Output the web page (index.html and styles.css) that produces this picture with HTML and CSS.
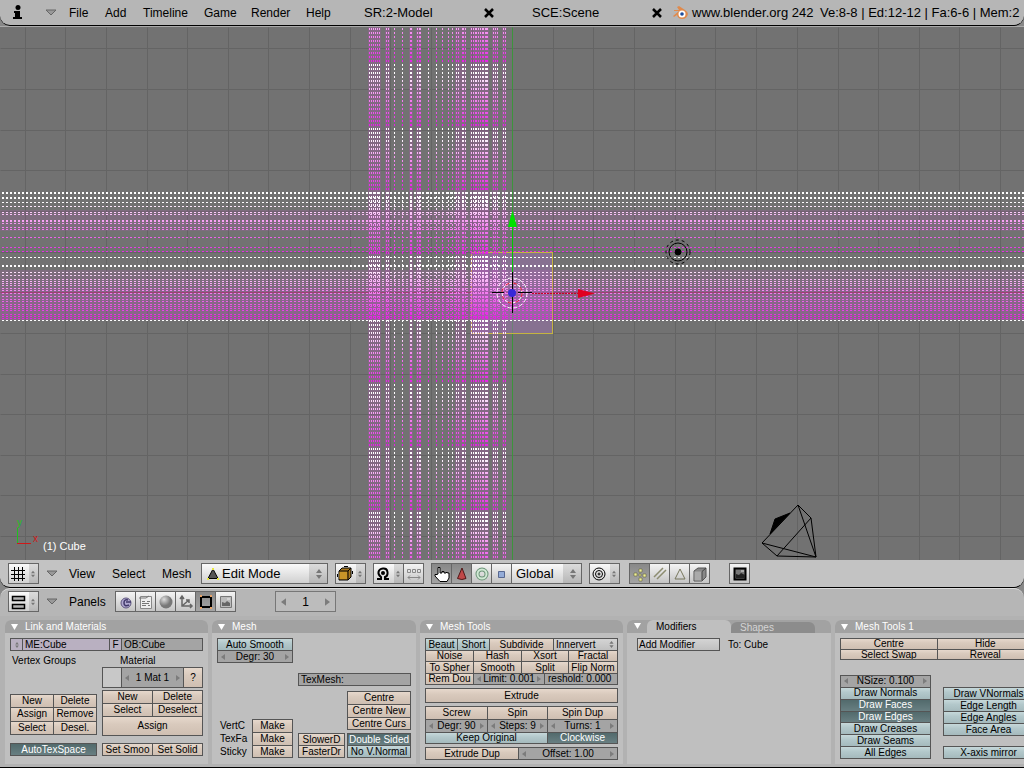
FILE: index.html
```
<!DOCTYPE html>
<html lang="en">
<head>
    <meta charset="UTF-8">
    <meta name="viewport" content="width=device-width, initial-scale=1.0">
    <title>Blender</title>
    <link rel="stylesheet" href="styles.css">
</head>
<body>
    <!-- shared icons -->
    <svg class="defs" width="0" height="0">
        <symbol id="fold" viewBox="0 0 12 7"><path d="M1 1h10L6 6z" fill="#999" stroke="#666"/></symbol>
        <symbol id="step" viewBox="0 0 6 10"><path d="M0 4l3-4 3 4zM0 6h6l-3 4z" fill="#777"/></symbol>
        <symbol id="close" viewBox="0 0 10 10"><path d="M1 1l8 8M9 1l-8 8" stroke="#000" stroke-width="2.5"/></symbol>
        <symbol id="left" viewBox="0 0 4 6"><path d="M4 0v6L0 3z" fill="#7c7c7c"/></symbol>
        <symbol id="right" viewBox="0 0 4 6"><path d="M0 0v6l4-3z" fill="#7c7c7c"/></symbol>
        <symbol id="open" viewBox="0 0 7 6"><path d="M0 0h7L3.500 6z" fill="#fff"/></symbol>
    </svg>

    <header class="info-bar">
        <button class="plain info-icon" aria-label="Window type"><svg width="9" height="15" viewBox="0 0 9 15"><circle cx="5" cy="2.500" r="2.500"/><path d="M1 6h6v6h2v2H0v-2h2V8H1z"/></svg></button>
        <button class="plain fold" aria-label="Collapse menus"><svg width="12" height="7"><use href="#fold"/></svg></button>
        <nav class="menus">
            <button class="plain m-file">File</button>
            <button class="plain m-add">Add</button>
            <button class="plain m-timeline">Timeline</button>
            <button class="plain m-game">Game</button>
            <button class="plain m-render">Render</button>
            <button class="plain m-help">Help</button>
        </nav>
        <input class="data-name screen-name" type="text" value="SR:2-Model" aria-label="Screen">
        <button class="plain close" aria-label="Delete screen"><svg width="10" height="10"><use href="#close"/></svg></button>
        <input class="data-name scene-name" type="text" value="SCE:Scene" aria-label="Scene">
        <button class="plain close" aria-label="Delete scene"><svg width="10" height="10"><use href="#close"/></svg></button>
        <svg class="logo" width="16" height="14" viewBox="0 0 16 14">
            <path d="M1 10L7 5H2V4h5L5 1l2-1 6 4q3 2 3 4-1 5-6 5-4 0-5-4l-3 2z" fill="#e08a4c"/>
            <circle cx="10" cy="8" r="3.500" fill="#fff"/><circle cx="10" cy="8" r="1.800" fill="#1c4c9c"/>
        </svg>
        <a class="site" href="#">www.blender.org 242</a>
        <span class="stats">Ve:8-8 | Ed:12-12 | Fa:6-6 | Mem:2</span>
    </header>

    <main class="view3d">
        <svg class="scene" viewBox="0 27 1024 533" preserveAspectRatio="xMidYMid slice">
            <defs>
                <linearGradient id="fade" gradientUnits="userSpaceOnUse" x1="0" y1="64" x2="0" y2="128" spreadMethod="repeat">
                    <stop offset="0" stop-color="#fff"/>
                    <stop offset=".15" stop-color="#fff"/>
                    <stop offset=".5" stop-color="#f690f2"/>
                    <stop offset="1" stop-color="#e418e4"/>
                </linearGradient>
            </defs>
            <g transform="translate(.5 .5)" fill="none">
                <path class="grid" d="M25 27v533M65 27v533M106 27v533M147 27v533M187 27v533M228 27v533M268 27v533M309 27v533M350 27v533M390 27v533M431 27v533M472 27v533M553 27v533M593 27v533M634 27v533M675 27v533M715 27v533M756 27v533M797 27v533M838 27v533M878 27v533M919 27v533M959 27v533M1000 27v533
                    M0 48h1024M0 89h1024M0 130h1024M0 170h1024M0 211h1024M0 252h1024M0 333h1024M0 374h1024M0 414h1024M0 455h1024M0 495h1024M0 536h1024"/>
                <path class="axis-x" d="M0 292h1024"/>
                <path class="axis-y" d="M512 27v533"/>
                <rect class="cube" x="471" y="252" width="81" height="81"/>
            </g>
            <!-- tint behind the stippled lines -->
            <g fill="#e838e8">
                <path d="M368 27h13v533h-13zM385 27h5v533h-5zM409 27h4v533h-4zM416 27h5v533h-5zM455 27h11v533h-11zM470 27h19v533h-19zM492 27h6v533h-6zM502 27h4v533h-4z" opacity=".16"/>
                <path d="M0 210h1024v21H0zM0 270h1024v18H0z" opacity=".1"/>
                <path d="M0 288h1024v32H0z" opacity=".2"/>
            </g>
            <!-- stippled columns and rows -->
            <g transform="translate(.5 0)">
                <path class="stipple" d="M369 28v532M371 28v532M373 28v532M375 28v532M377 28v532M379 28v532M386 28v532M388 28v532M394 28v532M402 28v532M410 28v532M411 28v532M417 28v532M419 28v532M420 28v532M428 28v532M436 28v532M442 28v532M448 28v532M452 28v532M456 28v532M458 28v532M462 28v532M463 28v532M465 28v532M471 28v532M473 28v532M475 28v532M476 28v532M478 28v532M480 28v532M482 28v532M483 28v532M485 28v532M486 28v532M487 28v532M493 28v532M495 28v532M497 28v532M503 28v532M505 28v532"/>
            </g>
            <g transform="translate(0 .5)">
                <path class="stipple" d="M2 192h1022M2 193h1022M2 197h1022M2 198h1022M2 202h1022M2 206h1022M2 212h1022M2 214h1022M2 220h1022M2 221h1022M2 223h1022M2 227h1022M2 229h1022M2 237h1022M2 247h1022M2 251h1022M2 257h1022M2 265h1022M2 266h1022M2 272h1022M2 275h1022M2 279h1022M2 281h1022M2 283h1022M2 285h1022M2 288h1022M2 290h1022M2 293h1022M2 296h1022M2 299h1022M2 301h1022M2 304h1022M2 306h1022M2 308h1022M2 310h1022M2 314h1022M2 316h1022M2 318h1022M2 320h1022"/>
            </g>
            <!-- manipulator and 3D cursor -->
            <g fill="none">
                <path d="M512.500 228v44" stroke="#00c800"/>
                <path d="M508 227h9l-4.500-17z" fill="#00e000"/>
                <path d="M532 293.500h47" stroke="#c80020" stroke-dasharray="2 1"/>
                <path d="M578 289v9l17-4.500z" fill="#e00020"/>
                <circle cx="512" cy="293" r="15" stroke="#fff" stroke-dasharray="4 2"/>
                <circle cx="512" cy="293" r="10" stroke="#fff"/>
                <circle cx="512" cy="293" r="10" stroke="#e00020" stroke-dasharray="4 4"/>
                <path d="M512.500 272v41M492 292.500h12M518 292.500h14" stroke="#000"/>
                <circle cx="512" cy="293" r="4" fill="#3828d8"/>
            </g>
            <g fill="none" stroke="#000">
                <circle cx="678" cy="252" r="3" fill="#000"/>
                <circle cx="678" cy="252" r="9"/>
                <circle cx="678" cy="252" r="12" stroke-dasharray="3 3"/>
                <path d="M798 505l13 13 5 39zM798 505l-36 38 54 14-39-1-15-13M811 518l-34 38"/>
                <path d="M790 513l-15 6-5 15z" fill="#000"/>
            </g>
            <path d="M17.500 528v16" stroke="#20c020"/><path d="M17 543.500h14" stroke="#d01818"/>
            <text x="17" y="526" class="axis-label" fill="#20c020">y</text>
            <text x="33" y="542" class="axis-label" fill="#d01818">x</text>
            <text x="43" y="550" class="object-name">(1) Cube</text>
        </svg>
    </main>

    <div class="lower">
    <div class="toolbar view-bar">
        <button class="ctl type" aria-label="Editor type"><svg width="18" height="18" viewBox="0 0 18 18"><path d="M5.500 2v14M9.500 2v14M13.500 2v14M2 5.500h14M2 9.500h14M2 13.500h14" stroke="#000"/></svg><svg class="st" width="4" height="8"><use href="#step"/></svg></button>
        <button class="plain fold" aria-label="Collapse menus"><svg width="12" height="7"><use href="#fold"/></svg></button>
        <nav class="menus">
            <button class="plain m-view">View</button>
            <button class="plain m-select">Select</button>
            <button class="plain m-mesh">Mesh</button>
        </nav>
        <div class="drop mode">
            <svg class="mode-icon" width="12" height="12" viewBox="0 0 12 12"><path d="M6 1l5 9.500H1z" fill="#555" stroke="#000"/><path d="M5 0h2v2H5zM0 10h2v2H0zM10 10h2v2h-2z" fill="#e8e840"/></svg>
            <select aria-label="Mode"><option>Edit Mode</option></select>
            <svg class="st" width="8" height="10"><use href="#step"/></svg>
        </div>
        <button class="ctl type" aria-label="Draw type"><svg width="18" height="18" viewBox="0 0 18 18"><path d="M3 6l3-3h9v9l-3 3H3z" fill="#a87820" stroke="#000"/><path d="M3.500 6.500H11V14H3.500z" fill="#c89428"/><path d="M3 6h9l3-3M12 6v9M1.500 9v3M16.500 6v3M8 1.500h4" stroke="#000" fill="none"/></svg><svg class="st" width="4" height="8"><use href="#step"/></svg></button>
        <div class="joined">
            <button class="ctl type" aria-label="Pivot"><svg width="18" height="18" viewBox="0 0 18 18"><path d="M3 14h4v-2Q4 10 4.500 7T9 3.500 13.500 7 11 12v2h4" fill="none" stroke="#000" stroke-width="2"/><circle cx="9" cy="8" r="2"/></svg><svg class="st" width="4" height="8"><use href="#step"/></svg></button>
            <button class="ctl" aria-label="Move centers only"><svg width="18" height="18" viewBox="0 0 18 18"><path d="M2.500 4.500h3v3h-3zM7.500 4.500h3v3h-3zM12.500 4.500h3v3h-3zM3 12.500h12M5 10.500l-2 2 2 2M13 10.500l2 2-2 2" fill="none" stroke="#888"/></svg></button>
        </div>
        <div class="joined">
            <button class="ctl on" aria-label="Manipulator"><svg width="18" height="18" viewBox="0 0 18 18"><path d="M5 9V2.500h2V8h2V6.500h2V8h2v-.500h1.500V8H16v5l-2 3.500H7L2 11V9.500h2z" fill="#fff" stroke="#000"/></svg></button>
            <button class="ctl on" aria-label="Translate"><svg width="18" height="18" viewBox="0 0 18 18"><path d="M9 3L4.500 13.500Q9 15.500 13 13.500z" fill="#c04848" stroke="#501818"/></svg></button>
            <button class="ctl" aria-label="Rotate"><svg width="18" height="18" viewBox="0 0 18 18" fill="none"><circle cx="9" cy="9" r="4.500" stroke="#6c9478" stroke-width="4"/><circle cx="9" cy="9" r="4.500" stroke="#d0e8d4" stroke-width="2"/></svg></button>
            <button class="ctl" aria-label="Scale"><svg width="18" height="18" viewBox="0 0 18 18"><path d="M5.500 6.500h6v6h-6z" fill="#94acd8" stroke="#586890"/></svg></button>
            <div class="drop orient"><select aria-label="Orientation"><option>Global</option></select><svg class="st" width="8" height="10"><use href="#step"/></svg></div>
        </div>
        <button class="ctl type prop" aria-label="Proportional"><svg width="18" height="18" viewBox="0 0 18 18" fill="none" stroke="#000"><circle cx="9" cy="9" r="6"/><circle cx="9" cy="9" r="3.500"/><circle cx="9" cy="9" r="1" /></svg><svg class="st" width="4" height="8"><use href="#step"/></svg></button>
        <div class="joined sel-modes">
            <button class="ctl on" aria-label="Vertex select"><svg width="18" height="18" viewBox="0 0 18 18"><path d="M8 4h3v3H8zM3 8h3v3H3zM12 9h3v3h-3zM8 13h3v3H8zM8 9h2v2H8z" fill="#f0f098" stroke="#66663c" stroke-width=".6"/></svg></button>
            <button class="ctl" aria-label="Edge select"><svg width="18" height="18" viewBox="0 0 18 18"><path d="M3 12l9-9M6 14l9-9" stroke="#8c8c70" stroke-width="1.500"/></svg></button>
            <button class="ctl" aria-label="Face select"><svg width="18" height="18" viewBox="0 0 18 18"><path d="M9 4l5 10H4z" fill="none" stroke="#77775c"/></svg></button>
            <button class="ctl" aria-label="Occlude"><svg width="18" height="18" viewBox="0 0 18 18"><path d="M3 6l4-3h8v9l-4 4H3z" fill="#888" stroke="#555"/><path d="M3.500 6.500H11v9H3.500z" fill="#aaa"/><path d="M11 6.500l4-3.500M11 6.500v9" stroke="#444" fill="none"/></svg></button>
        </div>
        <button class="ctl render" aria-label="Render view"><svg width="18" height="18" viewBox="0 0 18 18"><path d="M3.500 3.500h11v11h-11z" fill="#777" stroke="#000" stroke-width="2"/><path d="M5 13V9l3 1 2-2 4 2v3z" fill="#222"/><path d="M10 6h3" stroke="#ddd"/></svg></button>
    </div>

    <div class="toolbar buttons-bar">
        <button class="ctl type" aria-label="Editor type"><svg width="18" height="18" viewBox="0 0 18 18"><path d="M3.500 3.500h12v4h-12zM3.500 11.500h12v4h-12z" fill="#b4b4b4" stroke="#000" stroke-width="1.500"/></svg><svg class="st" width="4" height="8"><use href="#step"/></svg></button>
        <button class="plain fold" aria-label="Collapse menus"><svg width="12" height="7"><use href="#fold"/></svg></button>
        <button class="plain m-panels">Panels</button>
        <div class="joined">
            <button class="ctl" aria-label="Logic"><svg width="18" height="18" viewBox="0 0 18 18"><circle cx="9" cy="10" r="5" fill="#b0a8d0" stroke="#605880"/><path d="M14 9H9M11 7q-4-1-4 3t5 2" fill="none" stroke="#403868" stroke-width="1.500"/></svg></button>
            <button class="ctl" aria-label="Script"><svg width="18" height="18" viewBox="0 0 18 18"><path d="M3.500 3.500h11v12h-11z" fill="#eee" stroke="#888"/><path d="M2 5h7l3-2M5 8.500h3M10 8.500h3M5 10.500h7M5 12.500h4M11 12.500h2" stroke="#777" fill="none"/></svg></button>
            <button class="ctl" aria-label="Shading"><svg width="18" height="18" viewBox="0 0 18 18"><defs><radialGradient id="ball" cx=".35" cy=".3"><stop offset="0" stop-color="#ddd"/><stop offset="1" stop-color="#777"/></radialGradient></defs><circle cx="9" cy="9" r="6.500" fill="url(#ball)"/></svg></button>
            <button class="ctl" aria-label="Object"><svg width="18" height="18" viewBox="0 0 18 18"><path d="M5 4v9h10M5 13l7-6M3 6l2-3 2 3M13 11l2 2-2 2M9 7h3v3" fill="none" stroke="#666" stroke-width="1.500"/></svg></button>
            <button class="ctl on" aria-label="Editing"><svg width="18" height="18" viewBox="0 0 18 18"><path d="M4 4h10v10H4z" fill="none" stroke="#000" stroke-width="2"/><path d="M3 2h2v2H3zM13 2h2v2h-2zM3 14h2v2H3zM13 14h2v2h-2z" fill="#e8a468"/></svg></button>
            <button class="ctl" aria-label="Scene"><svg width="18" height="18" viewBox="0 0 18 18"><path d="M3.500 3.500h11v11h-11z" fill="#bbb" stroke="#777"/><path d="M5 13V9l3 1 2-2 3 2v3z" fill="#666"/><path d="M10 6h3" stroke="#eee"/></svg></button>
        </div>
        <div class="frame">
            <svg width="5" height="8"><use href="#left"/></svg><input type="text" value="1" aria-label="Frame"><svg width="5" height="8"><use href="#right"/></svg>
        </div>
    </div>

    <div class="panels">
        <section class="panel narrow">
            <h2><svg width="7" height="6"><use href="#open"/></svg>Link and Materials</h2>
            <div class="body">
                <div class="group link-row">
                    <button class="lilac" aria-label="Browse"><svg width="4" height="6"><use href="#step"/></svg></button>
                    <input class="lilac" type="text" value="ME:Cube" aria-label="Mesh name">
                    <button class="lilac">F</button>
                    <input class="num" type="text" value="OB:Cube" aria-label="Object name">
                </div>
                <div class="cols">
                    <div class="col vgroups">
                        <span class="label">Vertex Groups</span>
                        <div class="group vg-buttons">
                            <button>New</button><button>Delete</button>
                            <button>Assign</button><button>Remove</button>
                            <button>Select</button><button>Desel.</button>
                        </div>
                        <div class="group auto-tex"><button class="pressed">AutoTexSpace</button></div>
                    </div>
                    <div class="col material">
                        <span class="label mat-label">Material</span>
                        <div class="group mat-row">
                            <button class="swatch" aria-label="Material colour"></button>
                            <button class="num"><svg><use href="#left"/></svg>1 Mat 1<svg><use href="#right"/></svg></button>
                            <button>?</button>
                        </div>
                        <div class="group mat-buttons">
                            <button>New</button><button>Delete</button>
                            <button>Select</button><button>Deselect</button>
                            <button class="wide">Assign</button>
                        </div>
                        <div class="group set-row"><button>Set Smoo</button><button>Set Solid</button></div>
                    </div>
                </div>
            </div>
        </section>

        <section class="panel">
            <h2><svg width="7" height="6"><use href="#open"/></svg>Mesh</h2>
            <div class="body cols">
                <div class="col mesh-left">
                    <div class="group pair">
                        <button class="blue">Auto Smooth</button>
                        <button class="num"><svg><use href="#left"/></svg>Degr: 30<svg><use href="#right"/></svg></button>
                    </div>
                    <div class="make-row">
                        <div class="make-labels"><span>VertC</span><span>TexFa</span><span>Sticky</span></div>
                        <div class="group triple"><button>Make</button><button>Make</button><button>Make</button></div>
                    </div>
                </div>
                <div class="col mesh-right">
                    <div class="group texmesh"><input class="num" type="text" value="TexMesh:" aria-label="TexMesh"></div>
                    <div class="group triple centres"><button>Centre</button><button>Centre New</button><button>Centre Curs</button></div>
                    <div class="draw-row">
                        <div class="group pair"><button>SlowerD</button><button>FasterDr</button></div>
                        <div class="group pair"><button class="pressed">Double Sided</button><button class="blue">No V.Normal</button></div>
                    </div>
                </div>
            </div>
        </section>

        <section class="panel narrow">
            <h2><svg width="7" height="6"><use href="#open"/></svg>Mesh Tools</h2>
            <div class="body tools">
                <div class="group">
                    <div class="row r-subdiv">
                        <button class="blue">Beaut</button><button class="blue">Short</button><button>Subdivide</button>
                        <div class="mini-drop"><select aria-label="Corner type"><option>Innervert</option></select><svg width="5" height="7"><use href="#step"/></svg></div>
                    </div>
                    <div class="row r-four short"><button>Noise</button><button>Hash</button><button>Xsort</button><button>Fractal</button></div>
                    <div class="row r-four"><button>To Spher</button><button>Smooth</button><button>Split</button><button>Flip Norm</button></div>
                    <div class="row r-limit short"><button>Rem Dou</button><button class="num"><svg><use href="#left"/></svg>Limit: 0.001<svg><use href="#right"/></svg></button><button class="num">reshold: 0.000</button></div>
                </div>
                <div class="group extrude"><button>Extrude</button></div>
                <div class="group">
                    <div class="row r-spin"><button>Screw</button><button>Spin</button><button>Spin Dup</button></div>
                    <div class="row r-spin">
                        <button class="num"><svg><use href="#left"/></svg>Degr: 90<svg><use href="#right"/></svg></button>
                        <button class="num"><svg><use href="#left"/></svg>Steps: 9<svg><use href="#right"/></svg></button>
                        <button class="num"><svg><use href="#left"/></svg>Turns: 1<svg><use href="#right"/></svg></button>
                    </div>
                    <div class="row r-keep short"><button class="blue">Keep Original</button><button class="pressed">Clockwise</button></div>
                </div>
                <div class="group">
                    <div class="row r-dup"><button>Extrude Dup</button><button class="num"><svg><use href="#left"/></svg>Offset: 1.00<svg><use href="#right"/></svg></button></div>
                </div>
            </div>
        </section>

        <section class="panel">
            <div class="tabs">
                <svg width="7" height="6"><use href="#open"/></svg>
                <button class="tab active">Modifiers</button><button class="tab">Shapes</button>
            </div>
            <div class="body modifiers">
                <div class="group"><button class="grey">Add Modifier</button></div>
                <span>To: Cube</span>
            </div>
        </section>

        <section class="panel">
            <h2><svg width="7" height="6"><use href="#open"/></svg>Mesh Tools 1</h2>
            <div class="body">
                <div class="group hide-grid"><button>Centre</button><button>Hide</button><button>Select Swap</button><button>Reveal</button></div>
                <div class="cols draw-cols">
                    <div class="group draw-list">
                        <button class="num"><svg><use href="#left"/></svg>NSize: 0.100<svg><use href="#right"/></svg></button>
                        <button class="blue">Draw Normals</button>
                        <button class="pressed">Draw Faces</button>
                        <button class="pressed">Draw Edges</button>
                        <button class="blue">Draw Creases</button>
                        <button class="blue">Draw Seams</button>
                        <button class="blue">All Edges</button>
                    </div>
                    <div class="col info-list">
                        <div class="group"><button class="blue">Draw VNormals</button><button class="blue">Edge Length</button><button class="blue">Edge Angles</button><button class="blue">Face Area</button></div>
                        <div class="group"><button class="blue">X-axis mirror</button></div>
                    </div>
                </div>
            </div>
        </section>
    </div>
    </div>
</body>
</html>
```

FILE: styles.css
```
:root {
    --bar: #b6b6b6;
    --view-bar: #c3c3c3;
    --view: #727272;
    --panel: #bfbfbf;
    --panel-head: #a2a2a2;
    --outline: #555;
    --beige: linear-gradient(#e6d8cc, #d9cabd 40%, #cfbfb2);
    --blue: linear-gradient(#c6d8da, #b3c8cb 40%, #a5babd);
    --dark: linear-gradient(#526a6c, #687f82);
    --grey: linear-gradient(#d4d4d4, #c0c0c0);
    --field: #a4a4a4;
}

* {
    box-sizing: border-box;
}

body {
    margin: 0;
    height: 100vh;
    display: flex;
    flex-direction: column;
    overflow: hidden;
    background: #888;
    font-family: "Liberation Sans", Arial, sans-serif;
    font-size: 12px;
    color: #000;
}

button, input, select {
    font: inherit;
    color: inherit;
    margin: 0;
    padding: 0;
    border: 0;
    border-radius: 0;
    min-width: 0;
    background: none;
    appearance: none;
    white-space: nowrap;
}

svg {
    flex: none;
    display: block;
}

.defs {
    position: absolute;
}

.plain {
    text-align: left;
    flex: none;
}

.menus {
    display: flex;
}

/* top bar */
.info-bar {
    display: flex;
    align-items: center;
    flex: none;
    height: 26px;
    padding-left: 13px;
    background: var(--bar);
    border-bottom: 1px solid #000;
    border-radius: 0 0 10px 10px;
    overflow: hidden;
}

.info-icon { width: 32px; }
.fold { width: 24px; }
.m-file { width: 36px; }
.m-add { width: 38px; }
.m-timeline { width: 61px; }
.m-game { width: 47px; }
.m-render { width: 55px; }
.m-help { width: 58px; }

.data-name {
    flex: none;
    width: 120px;
    font-size: 13px;
}

.close {
    width: 48px;
}

.scene-name + .close {
    width: 20px;
}

.logo {
    margin-right: 4px;
}

.site {
    flex: none;
    width: 128px;
    color: inherit;
    font-size: 13px;
    text-decoration: none;
}

.stats {
    flex: 1;
    font-size: 13px;
    white-space: nowrap;
}

/* 3D view */
.view3d {
    flex: 1;
    min-height: 0;
    background: var(--view);
    border-top: 1px solid #aaa;
}

.scene {
    width: 100%;
    height: 100%;
}

.grid { stroke: #646464; }
.axis-x { stroke: #8c4058; }
.axis-y { stroke: #3c943c; }

.cube {
    fill: rgba(156, 112, 176, .5);
    stroke: #c4b440;
}

.stipple {
    fill: none;
    stroke: url(#fade);
    stroke-dasharray: 2 2;
}

.axis-label {
    font-size: 10px;
}

.object-name {
    font-size: 11px;
    fill: #fff;
}

/* lower part */
.lower {
    flex: none;
    background: #888;
}

.toolbar {
    display: flex;
    align-items: center;
    height: 28px;
    padding-left: 8px;
}

.view-bar {
    background: var(--view-bar);
    border-bottom: 1px solid #000;
    border-radius: 0 0 10px 10px;
}

.buttons-bar {
    padding-bottom: 2px;
    background: var(--bar);
    border-top: 1px solid #ddd;
    border-radius: 10px 10px 0 0;
}

.toolbar .fold {
    width: 23px;
    margin-left: 7px;
}

.m-view { width: 43px; }
.m-select { width: 50px; }
.m-mesh { width: 39px; }
.m-panels { width: 46px; }

.ctl {
    display: flex;
    align-items: center;
    justify-content: center;
    flex: none;
    width: 21px;
    height: 21px;
    border: 1px solid #666;
    background: linear-gradient(#f4f4f4, #c4c4c4);
}

.ctl.type {
    width: 31px;
    justify-content: flex-start;
    gap: 4px;
    background: linear-gradient(90deg, rgba(0, 0, 0, 0) 20px, rgba(0, 0, 0, .12) 20px), linear-gradient(#fafafa, #d0d0d0);
}

.ctl.on {
    background: linear-gradient(#888, #a4a4a4);
}

.joined {
    display: flex;
    margin-left: 7px;
}

.joined > * + * {
    margin-left: -1px;
}

.drop {
    display: flex;
    align-items: center;
    flex: none;
    height: 21px;
    padding-right: 4px;
    border: 1px solid #666;
    background: linear-gradient(270deg, rgba(0, 0, 0, .12) 18px, rgba(0, 0, 0, 0) 18px), linear-gradient(#fafafa, #d0d0d0);
}

.drop select {
    flex: 1;
}

.mode {
    width: 127px;
    margin-right: 7px;
    padding-left: 5px;
    gap: 3px;
}

.orient {
    width: 71px;
    padding-left: 4px;
}

.mode select,
.orient select {
    font-size: 13px;
}

.prop {
    margin-left: 7px;
}

.sel-modes {
    margin-left: 9px;
}

.render {
    margin-left: 19px;
}

.buttons-bar .joined {
    margin-left: 0;
}

.frame {
    display: flex;
    align-items: center;
    width: 61px;
    height: 21px;
    margin-left: 39px;
    padding: 0 5px;
    border: 1px solid #777;
    background: #bcbcbc;
}

.frame input {
    flex: 1;
    width: 20px;
    text-align: center;
}

/* panels */
.panels {
    display: flex;
    gap: 4px;
    height: 152px;
    padding: 4px 0 3px 5px;
    overflow: hidden;
    background: #b2b2b2;
    border-bottom: 1px solid #000;
    font-size: 10px;
}

.panel {
    display: flex;
    flex-direction: column;
    flex: none;
    width: 204px;
    background: var(--panel);
    border-radius: 6px 6px 0 0;
}

.panel.narrow {
    width: 203px;
}

.panel h2,
.tabs {
    display: flex;
    align-items: center;
    height: 13px;
    margin: 0;
    padding-left: 6px;
    background: var(--panel-head);
    border-radius: 6px 6px 0 0;
    color: #fff;
    font-size: 10px;
    font-weight: normal;
}

.panel h2 {
    gap: 7px;
}

.tabs {
    align-items: flex-end;
    padding-left: 7px;
}

.tabs svg {
    margin: 0 6px 4px 0;
}

.tab {
    width: 84px;
    height: 11px;
    border-radius: 6px 6px 0 0;
    background: #8c8c8c;
    color: #d4d4d4;
    padding-left: 9px;
    text-align: left;
}

.tab.active {
    height: 13px;
    background: var(--panel);
    color: #000;
}

.body {
    padding: 5px 5px 0;
}

.cols {
    display: flex;
    gap: 5px;
}

.col {
    display: flex;
    flex-direction: column;
}

/* blocks of joined buttons, the background shows as the outlines */
.group {
    display: grid;
    gap: 1px;
    padding: 1px;
    background: var(--outline);
}

.group button,
.group input {
    width: 100%;
    line-height: 10px;
    text-align: center;
    overflow: hidden;
    background: var(--beige);
}

.group .lilac { background: #b9b0c1; }
.group .blue { background: var(--blue); }
.group .grey { background: var(--grey); }
.group .swatch { background: #c8c8c8; }

.group .pressed {
    background: var(--dark);
    color: #fff;
}

.group .num {
    display: flex;
    align-items: center;
    justify-content: space-between;
    padding: 0 3px;
    background: var(--field);
}

.group .num svg {
    width: 4px;
    height: 6px;
}

.group input,
.group input.num {
    padding: 0 2px;
    text-align: left;
}

.label {
    height: 16px;
    padding-top: 3px;
    line-height: 13px;
}

/* Link and Materials */
.link-row {
    grid-template-columns: 11px 86px 11px 1fr;
    height: 13px;
}

.link-row svg {
    margin: auto;
}

.vgroups { width: 87px; }

.vgroups .label { padding-left: 2px; }

.vg-buttons {
    grid-template-columns: 42px 1fr;
    height: 41px;
    margin-top: 27px;
}

.auto-tex {
    height: 13px;
    margin-top: 8px;
}

.material { width: 101px; }

.mat-label { padding-left: 18px; }

.mat-row {
    grid-template-columns: 18px 1fr 18px;
    height: 21px;
}

.mat-buttons {
    grid-template-columns: 49px 1fr;
    grid-template-rows: 12px 12px 1fr;
    height: 46px;
    margin-top: 2px;
}

.wide {
    grid-column: span 2;
}

.set-row {
    grid-template-columns: 49px 1fr;
    height: 13px;
    margin-top: 7px;
}

/* Mesh */
.mesh-left {
    width: 76px;
    justify-content: space-between;
}

.pair { height: 25px; grid-template-rows: 11px 11px; }
.triple { height: 39px; grid-template-rows: 12px 12px 11px; }

.make-row {
    display: flex;
    padding-left: 3px;
}

.make-labels {
    display: grid;
    grid-template-rows: 13px 13px 13px;
    width: 32px;
    line-height: 13px;
}

.make-row .group {
    width: 41px;
}

.mesh-right { width: 113px; }

.texmesh {
    height: 13px;
    margin-top: 35px;
}

.centres {
    width: 64px;
    margin: 5px 0 3px auto;
}

.draw-row {
    display: grid;
    grid-template-columns: 47px 64px;
    gap: 2px;
}

/* Mesh Tools */
.tools {
    display: flex;
    flex-direction: column;
    gap: 3px;
}

.row {
    display: grid;
    gap: 1px;
    height: 11px;
}

.r-subdiv { grid-template-columns: 31px 31px 63px 1fr; }
.r-four { grid-template-columns: 47px 47px 46px 1fr; }
.r-limit { grid-template-columns: 47px 70px 1fr; }
.r-spin { grid-template-columns: 61px 59px 1fr; height: 12px; }
.r-keep { grid-template-columns: 121px 1fr; }
.r-dup { grid-template-columns: 92px 1fr; }

.row.short { height: 10px; }

.mini-drop {
    display: flex;
    align-items: center;
    padding: 0 3px 0 2px;
    background: var(--grey);
}

.mini-drop select {
    flex: 1;
    line-height: 10px;
}

.extrude {
    height: 15px;
}

/* Modifiers */
.modifiers {
    display: flex;
    align-items: center;
    gap: 8px;
    padding-left: 10px;
}

.modifiers .group {
    width: 83px;
    height: 13px;
}

.modifiers .grey {
    padding-left: 1px;
    text-align: left;
}

/* Mesh Tools 1 */
.hide-grid {
    grid-template-columns: 1fr 1fr;
    grid-template-rows: 10px 9px;
}

.draw-cols {
    gap: 12px;
    margin-top: 15px;
}

.draw-list {
    width: 91px;
    height: 84px;
}

.info-list {
    width: 91px;
    padding-top: 12px;
    justify-content: space-between;
}

.info-list .group {
    grid-auto-rows: 11px;
}
```
